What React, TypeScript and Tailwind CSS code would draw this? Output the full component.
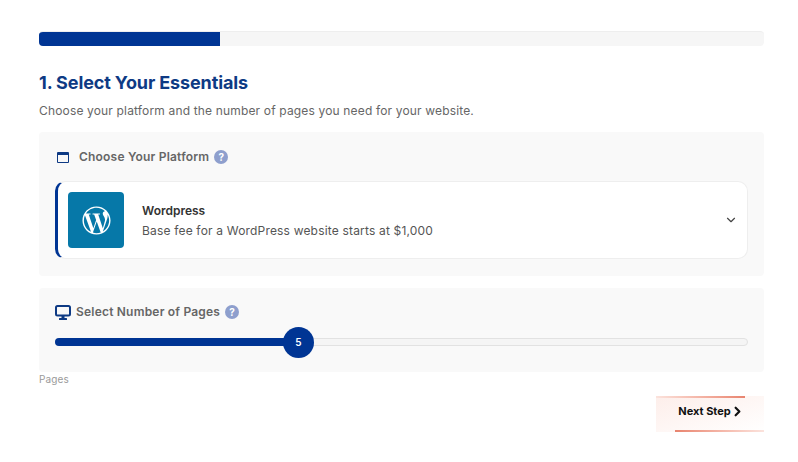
import { FaWordpressSimple } from "react-icons/fa";
import { ChevronDown, ChevronRight } from "lucide-react";

function Help() {
  return (
    <span className="flex h-[14px] w-[14px] items-center justify-center rounded-full bg-[#8e9fcd] text-[10px] font-bold text-white">
      ?
    </span>
  );
}

function DesktopIcon() {
  return (
    <svg viewBox="0 0 16 15" className="h-[15px] w-[16px] text-[#0e3a84]" fill="none">
      <rect x="1" y="1" width="14" height="9.5" rx="1.5" stroke="currentColor" strokeWidth="2" />
      <rect x="6.5" y="11" width="3" height="2.5" fill="currentColor" />
      <rect x="4" y="13" width="8" height="2" rx="0.5" fill="currentColor" />
    </svg>
  );
}

export default function App() {
  return (
    <div className="h-[462px] w-[798px] overflow-hidden bg-white pl-[39px] pr-[34px] pt-[31px] font-['Inter',sans-serif]">
      <div className="h-[15px] overflow-hidden rounded-[4px] border-t border-[#eeeeee] bg-[#f6f6f6]">
        <div className="-mt-px h-[15px] w-1/4 bg-[#003594]" />
      </div>

      <h2 className="mt-[26px] text-[18px] font-bold leading-[22px] tracking-[-0.12px] text-[#0e3a84]">
        1. Select Your Essentials
      </h2>
      <p className="mt-[8px] text-[12px] leading-[18px] tracking-[0.16px] text-[#666666]">
        Choose your platform and the number of pages you need for your website.
      </p>

      <section className="mt-[12px] h-[144px] rounded-[4px] bg-[#f9f9f9] pl-4 pr-4 pt-[16px]">
        <div className="flex h-[18px] items-center">
          <span className="ml-[2px] box-border h-[11px] w-[12px] rounded-[1px] border-[1.5px] border-t-[3px] border-[#0e3a84]" />
          <span className="ml-[10px] text-[12px] font-semibold tracking-[0.2px] text-[#666666]">
            Choose Your Platform
          </span>
          <span className="ml-[5px]">
            <Help />
          </span>
        </div>

        <div className="mt-[15px] flex h-[78px] items-center rounded-[10px] border border-[#eeeeee] border-l-[3px] border-l-[#003594] bg-white pl-[10px] pr-[10px]">
          <div className="flex h-[56px] w-[56px] items-center justify-center rounded-[4px] bg-[#0678a8]">
            <FaWordpressSimple className="h-[29px] w-[29px] text-white" />
          </div>
          <div className="ml-[18px] flex-1 pt-[2px]">
            <div className="text-[12px] font-semibold leading-[18px] text-[#333333]">Wordpress</div>
            <div className="mt-[2px] text-[12px] leading-[18px] tracking-[0.18px] text-[#555555]">
              Base fee for a WordPress website starts at $1,000
            </div>
          </div>
          <ChevronDown className="mr-[-1px] h-[14px] w-[14px] text-[#444444]" strokeWidth={2} />
        </div>
      </section>

      <section className="mt-[12px] h-[84px] rounded-[4px] bg-[#f9f9f9] pl-4 pr-4 pt-[15px]">
        <div className="flex h-[18px] items-center">
          <DesktopIcon />
          <span className="ml-[5px] text-[12px] font-semibold tracking-[0.2px] text-[#666666]">
            Select Number of Pages
          </span>
          <span className="ml-[5px]">
            <Help />
          </span>
        </div>

        <div className="relative mt-[17px] h-[8px] rounded-full border border-[#e2e2e2] bg-[#f5f5f5]">
          <div className="-m-px h-[8px] w-[35%] rounded-full bg-[#003594]" />
          <div className="absolute left-[227px] top-[-12px] flex h-[31px] w-[31px] items-center justify-center rounded-full bg-[#003594] text-[10px] font-semibold text-white">
            5
          </div>
        </div>
      </section>

      <div className="text-[10px] leading-[14px] tracking-[0.15px] text-[#9a9a9a]">Pages</div>

      <div className="flex justify-end">
        <button className="relative mt-[10px] flex h-[36px] w-[108px] items-center justify-center bg-gradient-to-br from-[#fdeeea] to-[#ffffff] pb-[5px] pl-[3px] text-[11px] font-bold text-[#111111]">
          <span className="absolute left-0 top-0 h-[2px] w-[89px] bg-gradient-to-r from-[#fbe3dd] to-[#e8846f]" />
          <span className="absolute bottom-0 right-0 h-[2px] w-[89px] bg-gradient-to-r from-[#e8846f] to-[#fbe3dd]" />
          Next Step
          <ChevronRight className="ml-[-1px] h-[15px] w-[15px]" strokeWidth={3.5} />
        </button>
      </div>
    </div>
  );
}
